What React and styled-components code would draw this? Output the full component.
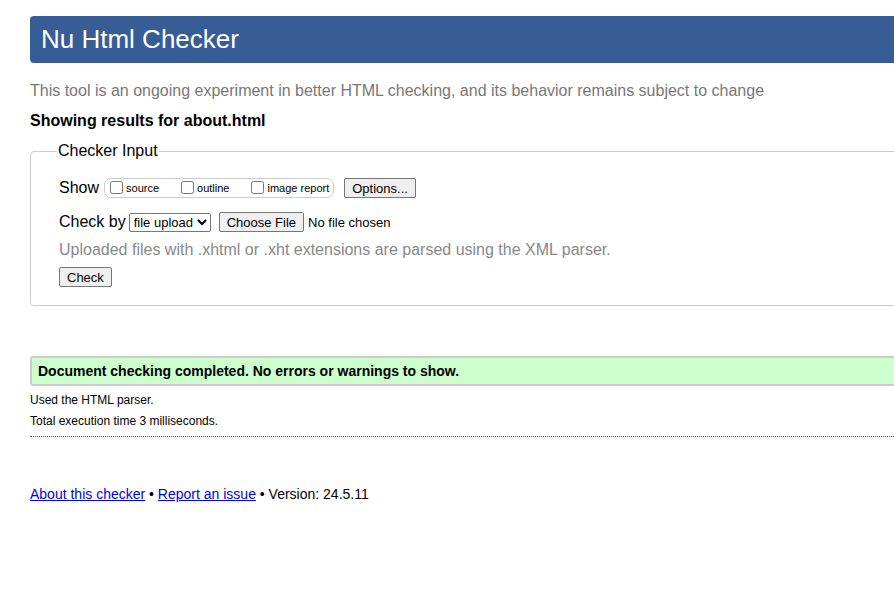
import React from 'react';
import styled, { createGlobalStyle } from 'styled-components';

const GlobalStyle = createGlobalStyle`
  html, body {
    margin: 0;
    padding: 0;
    overflow: hidden;
    background: #fff;
  }
  body {
    font-family: "Liberation Sans", Arial, sans-serif;
    color: #000;
  }
`;

export default function App() {
  return (
    <>
      <GlobalStyle />
      <Page>
        <Header>Nu Html Checker</Header>
        <Tagline>
          This tool is an ongoing experiment in better HTML checking, and its behavior remains subject to change
        </Tagline>
        <Results>Showing results for about.html</Results>

        <InputSet>
          <Legend>Checker Input</Legend>
          <Row>
            <RowLabel>Show</RowLabel>
            <ShowBox>
              <Option><input type="checkbox" />source</Option>
              <Option><input type="checkbox" />outline</Option>
              <Option><input type="checkbox" />image report</Option>
            </ShowBox>
            <Button type="button">Options...</Button>
          </Row>
          <Row>
            <RowLabel>Check by</RowLabel>
            <Select defaultValue="upload">
              <option value="address">address</option>
              <option value="upload">file upload</option>
              <option value="text">text input</option>
            </Select>
            <FilePick>
              <Button type="button">Choose File</Button>
              <span>No file chosen</span>
            </FilePick>
          </Row>
          <Hint>Uploaded files with .xhtml or .xht extensions are parsed using the XML parser.</Hint>
          <Button type="button">Check</Button>
        </InputSet>

        <Success>Document checking completed. No errors or warnings to show.</Success>
        <Detail>Used the HTML parser.</Detail>
        <Detail>Total execution time 3 milliseconds.</Detail>
        <Divider />

        <Footer>
          <a href="#about">About this checker</a> • <a href="#issue">Report an issue</a> • Version: 24.5.11
        </Footer>
      </Page>
    </>
  );
}

const Page = styled.main`
  width: 1000px;
  padding: 16px 0 0 30px;
`;

const Header = styled.h1`
  margin: 0;
  height: 47px;
  box-sizing: border-box;
  padding: 0 11px;
  display: flex;
  align-items: center;
  background: #365d95;
  color: #fff;
  font-size: 26px;
  font-weight: normal;
  border-radius: 4px;
`;

const Tagline = styled.p`
  margin: 18px 0 0;
  font-size: 16px;
  line-height: 20px;
  color: #777;
`;

const Results = styled.h2`
  margin: 9px 0 0;
  font-size: 16px;
  line-height: 22px;
  font-weight: bold;
`;

const InputSet = styled.fieldset`
  margin: 10px 0 0;
  padding: 18px 28px 18px;
  border: 1px solid #ccc;
  border-radius: 4px;
`;

const Legend = styled.legend`
  margin-left: -2px;
  padding: 0 1px;
  font-size: 16px;
`;

const Row = styled.div`
  display: flex;
  align-items: center;
  gap: 4px;
  margin-bottom: 14px;
  font-size: 16px;
`;

const RowLabel = styled.span`
  margin-right: 1px;
`;

const ShowBox = styled.div`
  display: flex;
  align-items: center;
  gap: 20px;
  height: 18px;
  padding: 0 4px 0 3px;
  border: 1px solid #ccc;
  border-radius: 7px;
  margin-right: 6px;
`;

const Option = styled.label`
  display: flex;
  align-items: center;
  font-size: 11px;
  line-height: 13px;
  input {
    margin: 0 3px 0 2px;
    width: 13px;
    height: 13px;
    position: relative;
    top: -1px;
  }
`;

const Button = styled.button`
  font-family: "Liberation Sans", Arial, sans-serif;
  font-size: 13px;
  height: 20px;
  padding: 0 7px;
  background: #efefef;
  border: 1px solid #767676;
  border-radius: 2px;
  color: #000;
`;

const Select = styled.select`
  font-family: "Liberation Sans", Arial, sans-serif;
  font-size: 13px;
  height: 19px;
  margin: 0 4px 0 -2px;
  border: 1px solid #767676;
  border-radius: 2px;
  background: #fff;
`;

const FilePick = styled.span`
  display: flex;
  align-items: center;
  gap: 4px;
  font-size: 13px;
`;

const Hint = styled.p`
  margin: -5px 0 8px;
  font-size: 16px;
  color: #888;
`;

const Success = styled.p`
  margin: 50px 0 0;
  height: 30px;
  box-sizing: border-box;
  display: flex;
  align-items: center;
  padding: 0 6px;
  background: #ccffcc;
  border: 2px solid #ccc;
  border-radius: 3px;
  font-size: 14px;
  font-weight: bold;
`;

const Detail = styled.p`
  margin: 7px 0 0;
  font-size: 12px;
  line-height: 15px;
  & + & {
    margin-top: 6px;
  }
`;

const Divider = styled.hr`
  margin: 7px 0 0;
  border: 0;
  border-top: 1px dotted #555;
`;

const Footer = styled.p`
  margin: 49px 0 0;
  font-size: 14px;
  a {
    color: #00e;
  }
`;
